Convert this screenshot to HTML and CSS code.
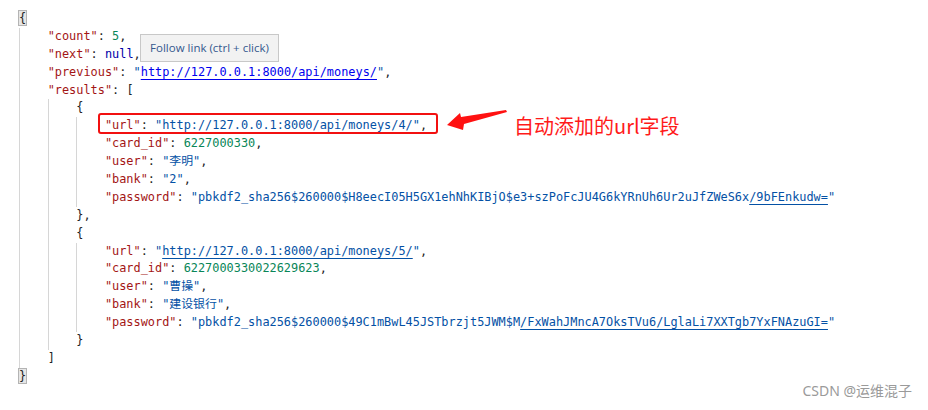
FILE: index.html
```html
<!DOCTYPE html>
<html lang="zh-CN">

<head>
    <meta charset="UTF-8">
    <title>moneys API</title>
    <link rel="stylesheet" href="styles.css">
</head>

<body>
    <section class="page">
        <div class="code">
            <div class="ln"><span class="match">{</span></div>
            <div class="blk">
                <div class="ln"><span class="k">"count"</span>: <span class="n">5</span>,</div>
                <div class="ln"><span class="k">"next"</span>: <span class="kw">null</span>,</div>
                <div class="ln"><span class="k">"previous"</span>: <span class="s">"</span><span class="s link hot">http://127.0.0.1:8000/api/moneys/</span><span class="s">"</span>,</div>
                <div class="ln"><span class="k">"results"</span>: [</div>
                <div class="blk">
                    <div class="ln">{</div>
                    <div class="blk">
                        <div class="ln"><span class="k">"url"</span>: <span class="s">"http://127.0.0.1:8000/api/moneys/4/"</span>,</div>
                        <div class="ln"><span class="k">"card_id"</span>: <span class="n">6227000330</span>,</div>
                        <div class="ln"><span class="k">"user"</span>: <span class="s">"李明"</span>,</div>
                        <div class="ln"><span class="k">"bank"</span>: <span class="s">"2"</span>,</div>
                        <div class="ln"><span class="k">"password"</span>: <span class="s">"pbkdf2_sha256$260000$H8eecI05H5GX1ehNhKIBjO$e3+szPoFcJU4G6kYRnUh6Ur2uJfZWeS6x</span><span class="s link">/9bFEnkudw=</span><span class="s">"</span></div>
                    </div>
                    <div class="ln">},</div>
                    <div class="ln">{</div>
                    <div class="blk">
                        <div class="ln"><span class="k">"url"</span>: <span class="s">"</span><span class="s link">http://127.0.0.1:8000/api/moneys/5/</span><span class="s">"</span>,</div>
                        <div class="ln"><span class="k">"card_id"</span>: <span class="n">6227000330022629623</span>,</div>
                        <div class="ln"><span class="k">"user"</span>: <span class="s">"曹操"</span>,</div>
                        <div class="ln"><span class="k">"bank"</span>: <span class="s">"建设银行"</span>,</div>
                        <div class="ln"><span class="k">"password"</span>: <span class="s">"pbkdf2_sha256$260000$49C1mBwL45JSTbrzjt5JWM$M</span><span class="s link">/FxWahJMncA7OksTVu6/LglaLi7XXTgb7YxFNAzuGI=</span><span class="s">"</span></div>
                    </div>
                    <div class="ln">}</div>
                </div>
                <div class="ln">]</div>
            </div>
            <div class="ln"><span class="match">}</span></div>
        </div>

        <!-- hover tooltip over the "previous" link -->
        <div class="tooltip">Follow link (ctrl + click)</div>

        <!-- annotation -->
        <div class="markBox"></div>
        <svg class="arrow" width="64" height="24" viewBox="0 0 64 24">
            <path d="M1 16 L14 4 L15 8 L60 1 L61 3 L18 15 L17 21 Z" fill="#ff1111" />
        </svg>
        <div class="note">自动添加的url字段</div>

        <div class="watermark">CSDN @运维混子</div>
    </section>
</body>

</html>
```

FILE: styles.css
```css
html {
    background-color: white;
}

body {
    margin: 0;
}

.page {
    position: relative;
    width: 928px;
    height: 410px;
    overflow: hidden;
}

.code {
    padding: 10px 0 0 19px;
    font-family: "DejaVu Sans Mono", "Noto Sans CJK SC", monospace;
    font-size: 11.9px;
    line-height: 17.9px;
    color: #222;
}

.ln {
    white-space: pre;
    height: 17.9px;
}

.blk {
    border-left: 1px solid #d6d6d6;
    padding-left: calc(4ch - 1px);
}

.k {
    color: #a31515;
}

.s {
    color: #0451a5;
}

.n {
    color: #098658;
}

.kw {
    color: #0000a8;
}

.link {
    text-decoration: underline;
    text-underline-offset: 3px;
}

.hot {
    color: #0000ee;
}

.match {
    background-color: #e6e6e6;
    outline: 1px solid #b4b4b4;
}

.tooltip {
    position: absolute;
    left: 140px;
    top: 34px;
    width: 137px;
    height: 26px;
    background-color: #f2f2f2;
    border: 1px solid #c8c8c8;
    font-family: "Open Sans", "Noto Sans", sans-serif;
    font-size: 11.5px;
    line-height: 26px;
    color: #34588e;
    text-align: center;
}

.markBox {
    position: absolute;
    left: 98px;
    top: 113px;
    width: 336px;
    height: 17px;
    border: 2px solid #f21010;
    border-radius: 3px;
}

.arrow {
    position: absolute;
    left: 446px;
    top: 109px;
}

.note {
    position: absolute;
    left: 514px;
    top: 115px;
    font-family: "Noto Sans CJK SC", sans-serif;
    font-size: 20px;
    line-height: 22px;
    color: #ff1a1a;
}

.watermark {
    position: absolute;
    right: 16px;
    top: 380px;
    font-family: "Noto Sans", "Noto Sans CJK SC", sans-serif;
    font-size: 14px;
    color: #9a9a9a;
}
```
